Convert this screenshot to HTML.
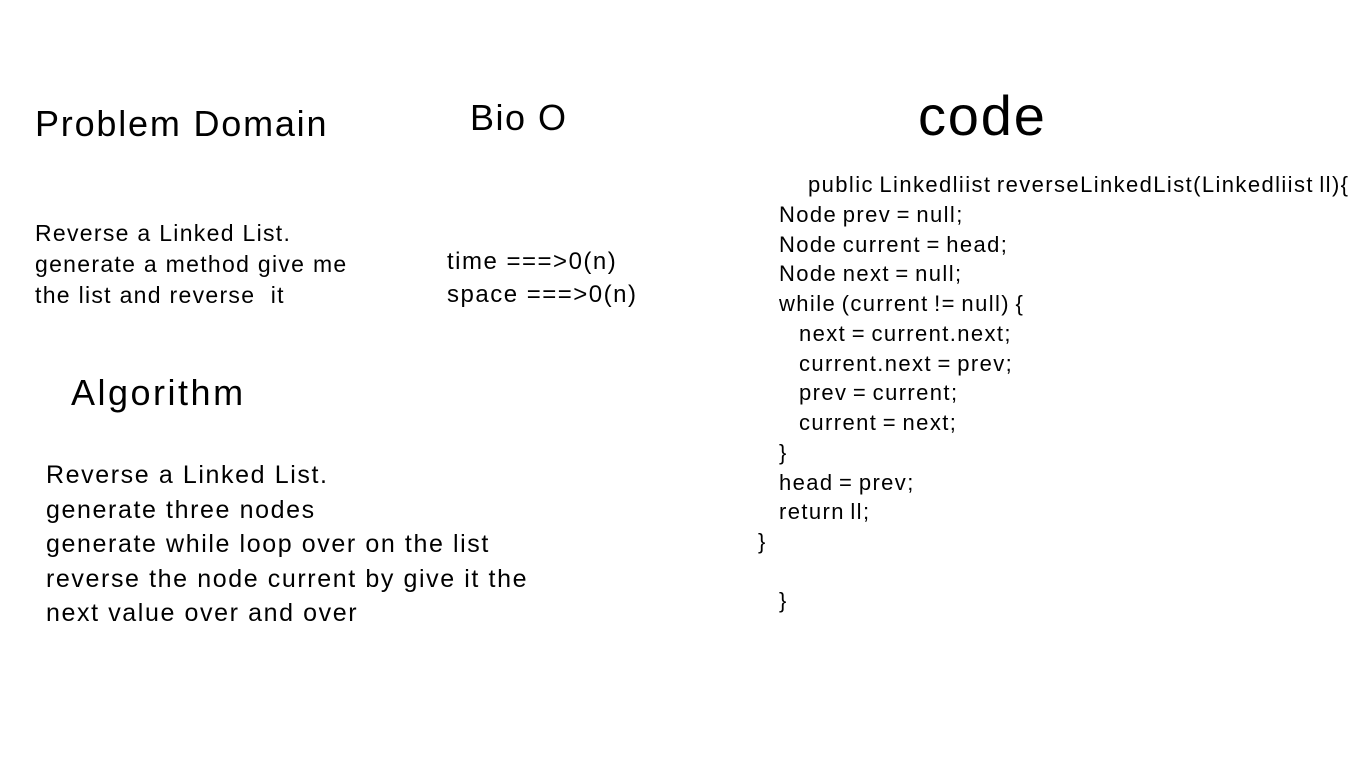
<!DOCTYPE html>
<html><head><meta charset="utf-8"><style>
body{margin:0;width:1366px;height:768px;background:#fff;position:relative;overflow:hidden;font-family:"Liberation Sans",sans-serif;color:#000}
div{position:absolute;white-space:pre;line-height:1}
.c{font-size:22px;letter-spacing:1.4px;word-spacing:-2px}
</style></head><body>
<div style="left:35px;top:106px;font-size:36px;letter-spacing:1.8px">Problem Domain</div>
<div style="left:470px;top:100px;font-size:36px;letter-spacing:1.5px">Bio O</div>
<div style="left:918px;top:88px;font-size:56px;letter-spacing:1.8px">code</div>
<div style="left:35px;top:218px;font-size:23px;line-height:31px;letter-spacing:1.3px">Reverse a Linked List.
generate a method give me
the list and reverse  it</div>
<div style="left:447px;top:245px;font-size:24px;line-height:33px;letter-spacing:1.5px">time ===&gt;0(n)
space ===&gt;0(n)</div>
<div style="left:71px;top:375px;font-size:36px;letter-spacing:2.5px">Algorithm</div>
<div style="left:46px;top:458px;font-size:25px;line-height:34.5px;letter-spacing:1.6px">Reverse a Linked List.
generate three nodes
generate while loop over on the list
reverse the node current by give it the
next value over and over</div>
<div class="c" style="left:808px;top:174px">public Linkedliist reverseLinkedList(Linkedliist ll){</div>
<div class="c" style="left:779px;top:204px">Node prev = null;</div>
<div class="c" style="left:779px;top:234px">Node current = head;</div>
<div class="c" style="left:779px;top:263px">Node next = null;</div>
<div class="c" style="left:779px;top:293px">while (current != null) {</div>
<div class="c" style="left:799px;top:323px">next = current.next;</div>
<div class="c" style="left:799px;top:353px">current.next = prev;</div>
<div class="c" style="left:799px;top:382px">prev = current;</div>
<div class="c" style="left:799px;top:412px">current = next;</div>
<div class="c" style="left:779px;top:442px">}</div>
<div class="c" style="left:779px;top:472px">head = prev;</div>
<div class="c" style="left:779px;top:501px">return ll;</div>
<div class="c" style="left:758px;top:531px">}</div>
<div class="c" style="left:779px;top:590px">}</div>
</body></html>
